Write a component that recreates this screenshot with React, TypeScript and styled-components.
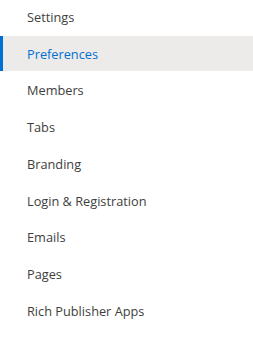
import styled, { createGlobalStyle } from "styled-components";

const items = [
  "Settings",
  "Preferences",
  "Members",
  "Tabs",
  "Branding",
  "Login & Registration",
  "Emails",
  "Pages",
  "Rich Publisher Apps",
];

export default function App() {
  const active = 1;
  return (
    <>
      <Global />
      <Nav>
        {items.map((label, i) => (
          <Item key={label} $active={i === active}>
            {label}
          </Item>
        ))}
      </Nav>
    </>
  );
}

const Global = createGlobalStyle`
  body {
    margin: 0;
    background: #fff;
    font-family: "Open Sans", "Liberation Sans", sans-serif;
  }
`;

const Nav = styled.nav`
  display: flex;
  flex-direction: column;
  gap: 1.75px;
  margin-top: -0.75px;
  width: 253px;
`;

const Item = styled.div<{ $active?: boolean }>`
  height: 35px;
  display: flex;
  align-items: center;
  padding-left: 27px;
  font-size: 12.75px;
  color: ${(p) => (p.$active ? "#0070d2" : "#3e3e3c")};
  background: ${(p) => (p.$active ? "#ecebea" : "transparent")};
  box-shadow: ${(p) => (p.$active ? "inset 3px 0 0 #0070d2" : "none")};
`;
